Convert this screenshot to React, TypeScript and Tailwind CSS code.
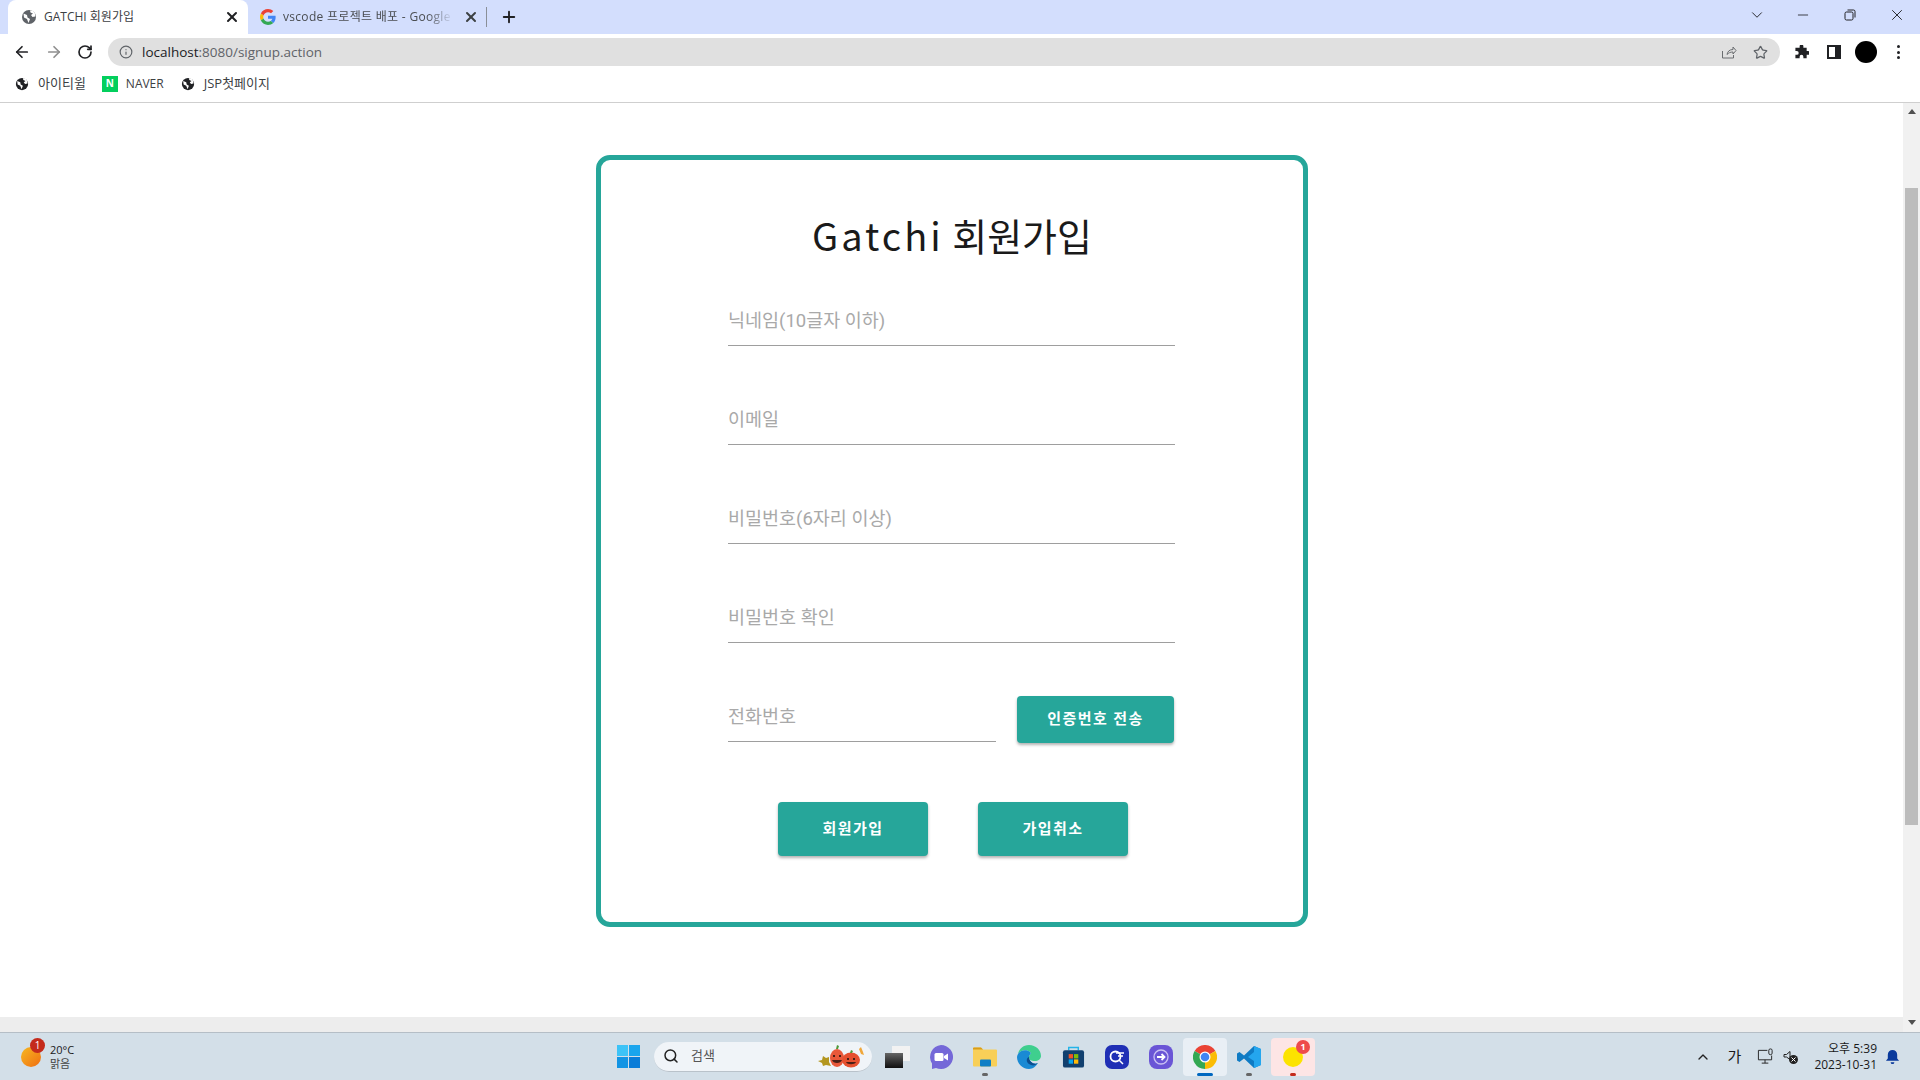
import React from "react";
import {
  ArrowLeft,
  ArrowRight,
  ChevronDown,
  ChevronUp,
  Info,
  Minus,
  Plus,
  RotateCw,
  Search,
  Star,
  X,
} from "lucide-react";

const ui = "font-['Open_Sans','Noto_Sans_CJK_KR',sans-serif]";

// globe favicon used for pages without icon
function Globe({ className }: { className: string }) {
  return (
    <svg viewBox="0 0 16 16" className={className}>
      <circle cx="8" cy="8" r="7" fill="currentColor" />
      <path d="M2.5 4.5 6 6l.5 2.5L9 10l-1.5 4L6 10 3 8.5zM9 1.5l.5 2 2.5 1-2 1.5 1.500 2 2.800-.5-.3-3-2.300-3z" fill="#fff" />
    </svg>
  );
}

function GoogleG() {
  return (
    <svg viewBox="0 0 48 48" className="w-4 h-4">
      <path fill="#EA4335" d="M24 9.500c3.500 0 6.700 1.300 9.100 3.500l6.800-6.800C35.800 2.400 30.200 0 24 0 14.600 0 6.500 5.400 2.600 13.200l7.900 6.200C12.400 13.700 17.700 9.500 24 9.500z" />
      <path fill="#4285F4" d="M46.900 24.500c0-1.600-.1-3.100-.4-4.500H24v9h12.900c-.6 3-2.200 5.500-4.700 7.200l7.700 6C44.400 37.900 46.900 31.800 46.900 24.500z" />
      <path fill="#FBBC05" d="M10.500 28.600c-.5-1.400-.8-3-.8-4.600s.3-3.200.8-4.600l-7.900-6.200C.9 16.500 0 20.100 0 24s.9 7.500 2.600 10.800z" />
      <path fill="#34A853" d="M24 48c6.500 0 11.900-2.100 15.900-5.800l-7.700-6c-2.100 1.400-4.900 2.300-8.200 2.300-6.300 0-11.600-4.200-13.500-9.900l-7.900 6.200C6.500 42.600 14.600 48 24 48z" />
    </svg>
  );
}

function Field({ placeholder, className = "w-full" }: { placeholder: string; className?: string }) {
  return (
    <input
      placeholder={placeholder}
      readOnly
      className={`${className} h-[48px] border-b border-[#9e9e9e] pb-px text-[18.5px] text-[#333] outline-none placeholder:text-[#a9a9a9] font-['Roboto','Noto_Sans_CJK_KR',sans-serif]`}
    />
  );
}

function TealButton({ children, className }: { children: React.ReactNode; className: string }) {
  return (
    <button className={`${className} rounded-[4px] bg-[#26a69a] text-[15px] font-semibold tracking-[1.4px] text-white shadow-[0_2px_3px_rgba(0,0,0,0.3)] font-['Roboto','Noto_Sans_CJK_KR',sans-serif]`}>
      {children}
    </button>
  );
}

function TaskIcon({ children, mark, active }: { children: React.ReactNode; mark?: string; active?: string }) {
  return (
    <div className={`relative flex h-[38px] w-[44px] items-center justify-center ${active ?? ""}`}>
      {children}
      {mark && <div className={`absolute bottom-0 left-1/2 -translate-x-1/2 rounded-full ${mark}`} />}
    </div>
  );
}

function TabStrip() {
  return (
    <div className={`flex h-[34px] items-end bg-[#d3defd] text-[12px] text-[#3c4043] ${ui}`}>
      <div className="ml-[8px] flex h-[34px] w-[240px] flex-none items-center rounded-t-[8px] bg-white pb-px pl-[13px] pr-[8px]">
        <Globe className="h-4 w-4 flex-none text-[#5f6368]" />
        <span className="ml-[7px] flex-1 text-[#3c4043]">GATCHI 회원가입</span>
        <X className="h-4 w-4 flex-none text-[#202124]" strokeWidth={3} />
      </div>
      <div className="flex h-[34px] w-[239px] flex-none items-center pb-px pl-[12px]">
        <div className="flex h-4 w-4 flex-none items-center justify-center">
          <GoogleG />
        </div>
        <span className="ml-[7px] w-[170px] flex-none overflow-hidden whitespace-nowrap tracking-[0.3px] text-[#4a4d51] [mask-image:linear-gradient(to_right,black_85%,transparent)]">vscode 프로젝트 배포 - Google</span>
        <X className="ml-[10px] h-4 w-4 flex-none text-[#3c4043]" strokeWidth={3} />
        <div className="ml-[7px] h-[20px] w-px flex-none bg-[#8a8f98]" />
      </div>
      <div className="flex h-[34px] items-center pb-px pl-[13px]">
        <Plus className="h-[18px] w-[18px] text-[#202124]" strokeWidth={2.5} />
      </div>
      <div className="flex-1" />
      <div className="flex h-[34px] items-center pb-[5px] text-[#202124]">
        <ChevronDown className="h-[18px] w-[18px]" strokeWidth={1.25} />
        <Minus className="ml-[29px] h-[16px] w-[16px]" strokeWidth={1.25} />
        <svg viewBox="0 0 12 12" className="ml-[33px] h-[12px] w-[12px]" fill="none" stroke="currentColor">
          <rect x="1" y="3" width="8" height="8" rx="1.500" />
          <path d="M3.500 1H9.500a1.500 1.500 0 0 1 1.500 1.500V8.500" />
        </svg>
        <X className="ml-[32px] mr-[14px] h-[18px] w-[18px]" strokeWidth={1.25} />
      </div>
    </div>
  );
}

function Toolbar() {
  return (
    <div className={`flex h-[36px] items-center bg-white ${ui}`}>
      <ArrowLeft className="ml-[13px] h-[18px] w-[18px] text-[#202124]" strokeWidth={2.25} />
      <ArrowRight className="ml-[14px] h-[18px] w-[18px] text-[#8f8f8f]" strokeWidth={2.25} />
      <RotateCw className="ml-[14px] h-[16px] w-[16px] text-[#202124]" strokeWidth={2.5} />
      <div className="ml-[15px] flex h-[28px] w-[1672px] flex-none items-center rounded-full bg-[#e0e0e0] pl-[11px] pr-[12px]">
        <Info className="h-[14px] w-[14px] text-[#5f6368]" strokeWidth={2} />
        <span className="ml-[9px] flex-1 text-[13.500px] text-[#202124]">
          localhost<span className="text-[#5f6368]">:8080/signup.action</span>
        </span>
        <svg viewBox="0 0 16 16" className="h-[16px] w-[16px] text-[#6a6d70]" fill="none" stroke="currentColor" strokeWidth="1">
          <path d="M1.500 7v7h11v-3M6 10.500c.5-3 2.500-5 6-5V3l3 3.500-3 3.500V8c-2.500 0-4.500.8-6 2.500z" />
        </svg>
        <Star className="ml-[16px] h-[15px] w-[15px] text-[#5f6368]" strokeWidth={2} />
      </div>
      <svg viewBox="0 0 16 16" className="ml-[14px] h-[15px] w-[15px] text-[#202124]" fill="currentColor">
        <path d="M6 1.500a2 2 0 0 1 4 0V3h3.500v3.500H15a2 2 0 0 1 0 4h-1.500V14H10v-1.500a2 2 0 0 0-4 0V14H1.500v-3.500H3a2 2 0 0 0 0-4H1.500V3H6z" />
      </svg>
      <div className="ml-[18px] flex h-[14px] w-[14px] justify-end border-[2.500px] border-[#202124] bg-white">
        <div className="h-full w-[4px] bg-[#202124]" />
      </div>
      <div className="ml-[14px] h-[22px] w-[22px] rounded-full bg-black" />
      <div className="ml-[20px] flex flex-col gap-[2.500px]">
        <div className="h-[3px] w-[3px] rounded-full bg-[#202124]" />
        <div className="h-[3px] w-[3px] rounded-full bg-[#202124]" />
        <div className="h-[3px] w-[3px] rounded-full bg-[#202124]" />
      </div>
    </div>
  );
}

function Bookmarks() {
  return (
    <div className={`flex h-[33px] items-center border-b border-[#cfcfcf] bg-white pb-[5px] pl-[15px] text-[13px] text-[#3c4043] ${ui}`}>
      <Globe className="h-[14px] w-[14px] text-[#202124]" />
      <span className="ml-[9px]">아이티윌</span>
      <div className="ml-[16px] flex h-[16px] w-[16px] items-center justify-center bg-[#03cf5d] text-[10px] font-bold text-white">N</div>
      <span className="ml-[8px] text-[12px]">NAVER</span>
      <Globe className="ml-[17px] h-[14px] w-[14px] text-[#202124]" />
      <span className="ml-[9px]">JSP첫페이지</span>
    </div>
  );
}

function SignupCard() {
  return (
    <div className="ml-[596px] mt-[52px] h-[772px] w-[712px] rounded-[14px] border-[5px] border-[#26a69a] bg-white">
      <div className="flex w-full flex-col items-center pt-[47px]">
        <h1 className="text-[38px] leading-[56px] text-[#1a1a1a] font-['Noto_Sans_CJK_KR',sans-serif]">
          <span className="tracking-[3px]">Gatchi</span> 회원가입
        </h1>
      </div>
      <div className="mt-[35px] flex flex-col gap-[51px] pl-[127px] pr-[128px]">
        <Field placeholder="닉네임(10글자 이하)" />
        <Field placeholder="이메일" />
        <Field placeholder="비밀번호(6자리 이상)" />
        <Field placeholder="비밀번호 확인" />
        <div className="flex items-end justify-between">
          <Field placeholder="전화번호" className="w-[268px]" />
          <TealButton className="mb-[-1px] mr-px h-[47px] w-[157px]">인증번호 전송</TealButton>
        </div>
      </div>
      <div className="mt-[60px] flex justify-center gap-[50px] pl-[2px]">
        <TealButton className="h-[54px] w-[150px]">회원가입</TealButton>
        <TealButton className="h-[54px] w-[150px]">가입취소</TealButton>
      </div>
    </div>
  );
}

function VScrollbar() {
  return (
    <div className="flex w-[17px] flex-none flex-col items-center bg-[#f1f1f1]">
      <div className="mt-[6px] h-0 w-0 border-x-[4px] border-b-[5px] border-x-transparent border-b-[#505050]" />
      <div className="mt-[74px] h-[637px] w-[13px] bg-[#bcbcbc]" />
      <div className="mt-[195px] h-0 w-0 border-x-[4px] border-t-[5px] border-x-transparent border-t-[#505050]" />
    </div>
  );
}

function Taskbar() {
  return (
    <div className={`flex h-[48px] items-center border-t border-[#b5bec6] bg-[#d3dfe8] text-[#1a1a1a] ${ui}`}>
      {/* weather */}
      <div className="relative ml-[21px] h-[20px] w-[20px] flex-none rounded-full bg-gradient-to-br from-[#f5b821] to-[#ee6c12]">
        <div className="absolute left-[9px] top-[-9px] flex h-[15px] w-[15px] items-center justify-center rounded-full bg-[#c42b1c] text-[10px] text-white">1</div>
      </div>
      <div className="ml-[9px] w-[40px] flex-none text-[11px] leading-[14px]">
        <div>20°C</div>
        <div className="text-[#444]">맑음</div>
      </div>

      {/* start and search */}
      <div className="ml-[527px] grid h-[23px] w-[23px] flex-none grid-cols-2 gap-px">
        <div className="bg-[#3cc3f7]" />
        <div className="bg-[#1aa5ed]" />
        <div className="bg-[#1294e4]" />
        <div className="bg-[#0b7dd8]" />
      </div>
      <div className="ml-[14px] flex h-[30px] w-[218px] flex-none items-center rounded-full border-b border-[#b9c2ca] bg-[#f0f4f8] pl-[9px]">
        <Search className="h-[16px] w-[16px] text-[#222]" strokeWidth={2.25} />
        <span className="ml-[12px] text-[13px] text-[#555]">검색</span>
        <svg viewBox="0 0 48 24" className="ml-auto mr-[7px] h-[24px] w-[48px]">
          <path d="M1 17l4-1 1-4 3 2 3-1v5l2 4-5-1-3 1-1-3z" fill="#b3961f" />
          <path d="M44 3l2 5 1 3-3-1-2-5z" fill="#f0a73a" />
          <ellipse cx="20" cy="14" rx="7" ry="9" fill="#e8583a" />
          <path d="M19 5l1-4 2 1-1 3z" fill="#4f9a3a" />
          <ellipse cx="34" cy="16" rx="9" ry="7.500" fill="#e5502f" />
          <path d="M33 9l1-3 2 1-1 2z" fill="#4f9a3a" />
          <path d="M16 11h2v2h-2zM22 11h2v2h-2zM15 16h10c-1 4-9 4-10 0zM30 14h2v2h-2zM36 14h2v2h-2zM29 18h10c-1 3-9 3-10 0z" fill="#4a1f16" />
        </svg>
      </div>

      {/* pinned apps */}
      <div className="ml-[3px] flex items-center">
        <TaskIcon>
          <div className="relative h-[22px] w-[25px]">
            <div className="absolute right-0 top-0 h-[15px] w-[18px] bg-[#f2f2f2]" />
            <div className="absolute bottom-0 left-0 h-[15px] w-[18px] bg-gradient-to-b from-[#666] to-[#111]" />
          </div>
        </TaskIcon>
        <TaskIcon>
          <svg viewBox="0 0 24 24" className="h-[24px] w-[24px]">
            <path d="M12 0a12 12 0 1 1-5 22.900L3 24v-5.500A12 12 0 0 1 12 0z" fill="#7468d8" />
            <rect x="5.500" y="8" width="9" height="8" rx="1.500" fill="#fff" />
            <path d="M15 11l4-2.500v7L15 13z" fill="#fff" />
          </svg>
        </TaskIcon>
        <TaskIcon mark="h-[3px] w-[6px] bg-[#666]">
          <svg viewBox="0 0 24 20" className="h-[21px] w-[24px]">
            <path d="M0 2a1 1 0 0 1 1-1h7l2 2h13a1 1 0 0 1 1 1v15a1 1 0 0 1-1 1H1a1 1 0 0 1-1-1z" fill="#f8cf58" />
            <path d="M0 2a1 1 0 0 1 1-1h7l2 2H0z" fill="#d99d1a" />
            <rect x="7" y="13" width="11" height="7" rx="1" fill="#0f7fc6" />
          </svg>
        </TaskIcon>
        <TaskIcon>
          <svg viewBox="0 0 24 24" className="h-[24px] w-[24px]">
            <path d="M12 0c7 0 12 5 12 11 0 3-3 5-6 5-4 0-6-1-6-4 0-3 3-3 1-5C10 4 3 5 1 9 2 4 6 0 12 0z" fill="#3fcf8e" />
            <path d="M1 9C3 5 10 4 13 7c2 2-1 2-1 5 0 5 5 8 9 6-2 3-5 6-9 6C5 24 0 18 0 12c0-1 .5-2 1-3z" fill="#1a8ad4" />
            <path d="M12 12c0 5 5 8 9 6-3 3-6 3-9 1-3-2-3-6 0-7z" fill="#0c4f8f" />
          </svg>
        </TaskIcon>
        <TaskIcon>
          <svg viewBox="0 0 24 24" className="h-[24px] w-[23px]">
            <path d="M7 5V2h10v3" fill="none" stroke="#25b4e8" strokeWidth="1.500" />
            <rect x="1" y="5" width="22" height="18" rx="2" fill="#11406f" />
            <rect x="7" y="9" width="4.500" height="4.500" fill="#f35325" />
            <rect x="12.500" y="9" width="4.500" height="4.500" fill="#81bc06" />
            <rect x="7" y="14.500" width="4.500" height="4.500" fill="#05a6f0" />
            <rect x="12.500" y="14.500" width="4.500" height="4.500" fill="#ffba08" />
          </svg>
        </TaskIcon>
        <TaskIcon>
          <svg viewBox="0 0 24 24" className="h-[24px] w-[24px]">
            <rect width="24" height="24" rx="7" fill="#1f2fb5" />
            <circle cx="10.500" cy="11.500" r="5" fill="none" stroke="#fff" strokeWidth="1.800" />
            <path d="M14 15l4 4M11 8h8M13 11h5" stroke="#fff" strokeWidth="1.500" />
          </svg>
        </TaskIcon>
        <TaskIcon>
          <svg viewBox="0 0 24 24" className="h-[24px] w-[24px]">
            <rect width="24" height="24" rx="8" fill="#6a55d6" />
            <circle cx="12" cy="12" r="7" fill="none" stroke="#c9c0f2" strokeWidth="1.300" />
            <path d="M8 12h7M12.500 9l3 3-3 3" fill="none" stroke="#fff" strokeWidth="1.800" />
          </svg>
        </TaskIcon>
        <TaskIcon active="rounded-[4px] bg-[#e9eff5]" mark="h-[3px] w-[16px] bg-[#0067c0]">
          <svg viewBox="0 0 24 24" className="h-[24px] w-[24px]">
            <path d="M12 12 1.600 6A12 12 0 0 1 22.400 6z" fill="#ea4335" />
            <path d="M12 12 22.400 6A12 12 0 0 1 12 24z" fill="#fbbc05" />
            <path d="M12 12 12 24A12 12 0 0 1 1.600 6z" fill="#34a853" />
            <circle cx="12" cy="12" r="5.500" fill="#fff" />
            <circle cx="12" cy="12" r="4.300" fill="#4285f4" />
          </svg>
        </TaskIcon>
        <TaskIcon mark="h-[3px] w-[6px] bg-[#666]">
          <svg viewBox="0 0 24 24" className="h-[24px] w-[24px]">
            <path d="M17 1 24 4v16l-7 3-10-9.500L2.500 17 0 15.500v-7L2.500 7 7 10.500z" fill="#0f7bc4" />
            <path d="M17 1 24 4v16l-7 3V16l-6-4 6-5z" fill="#24a6ee" />
          </svg>
        </TaskIcon>
        <TaskIcon active="rounded-[4px] bg-[#fde5e5]" mark="h-[3px] w-[6px] bg-[#c42b1c]">
          <div className="relative h-[20px] w-[20px] rounded-full bg-[#fce300]">
            <div className="absolute left-[13px] top-[-7px] flex h-[14px] w-[14px] items-center justify-center rounded-full bg-[#ee4b4b] text-[9px] font-bold text-white">1</div>
          </div>
        </TaskIcon>
      </div>

      {/* tray */}
      <div className="flex-1" />
      <ChevronUp className="h-[16px] w-[16px] text-[#222]" strokeWidth={2} />
      <span className="ml-[17px] text-[15px]">가</span>
      <svg viewBox="0 0 18 18" className="ml-[16px] h-[17px] w-[17px]" fill="none" stroke="#222" strokeWidth="1">
        <path d="M11 2.500H1.500v10h14V8M5 16h7M8.500 12.500V16" />
        <rect x="12.500" y="1" width="3.500" height="6" rx="1.500" />
      </svg>
      <svg viewBox="0 0 16 16" className="ml-[9px] h-[16px] w-[16px]">
        <path d="M1 5.500h2.500L7 2.500v8L3.500 8H1z" fill="none" stroke="#222" />
        <circle cx="10.500" cy="10.500" r="4.500" fill="#222" />
        <path d="M8.500 8.500l4 4M12.500 8.500l-4 4" stroke="#fff" />
      </svg>
      <div className="ml-[15px] text-right text-[12px] leading-[16px]">
        <div>오후 5:39</div>
        <div>2023-10-31</div>
      </div>
      <svg viewBox="0 0 16 16" className="ml-[8px] mr-[20px] h-[15px] w-[15px]" fill="#0a3a9c">
        <path d="M8 1a5 5 0 0 0-5 5v4l-2 2.500h14L13 10V6a5 5 0 0 0-5-5zM6 14a2 2 0 0 0 4 0z" />
      </svg>
    </div>
  );
}

export default function App() {
  return (
    <div className="flex h-screen w-full flex-col overflow-hidden bg-white">
      <TabStrip />
      <Toolbar />
      <Bookmarks />
      <div className="flex min-h-0 flex-1">
        <div className="flex min-w-0 flex-1 flex-col">
          <div className="min-h-0 flex-1">
            <SignupCard />
          </div>
          <div className="h-[15px] flex-none bg-[#ededed]" />
        </div>
        <VScrollbar />
      </div>
      <Taskbar />
    </div>
  );
}
